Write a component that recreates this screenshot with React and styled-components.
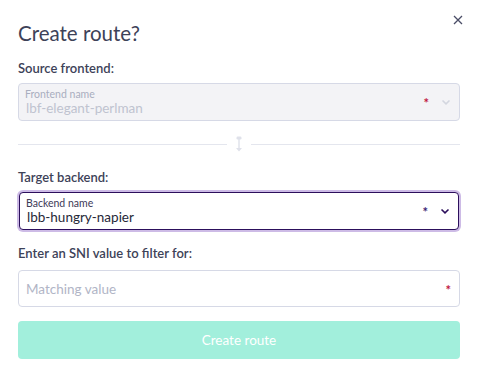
import React from 'react';
import styled, { createGlobalStyle } from 'styled-components';

const GlobalStyle = createGlobalStyle`
  body {
    margin: 0;
    background: #ffffff;
    font-family: Lato, 'Noto Sans', sans-serif;
  }
`;

const Modal = styled.div`
  position: relative;
  width: 480px;
  height: 377px;
  box-sizing: border-box;
  padding: 20px 20px 0 18px;
  display: flex;
  flex-direction: column;
`;

const Title = styled.h2`
  margin: 0;
  font-size: 20.5px;
  font-weight: 400;
  line-height: 26px;
  color: #3d4258;
`;

const Close = styled.button`
  position: absolute;
  top: 12px;
  right: 14px;
  width: 16px;
  height: 16px;
  padding: 0;
  border: none;
  background: none;
  display: flex;
  align-items: center;
  justify-content: center;
`;

const Label = styled.div`
  margin-top: ${(p) => p.top}px;
  font-size: 13px;
  font-weight: 600;
  line-height: 18px;
  color: #3d4258;
`;

const Field = styled.div`
  margin-top: ${(p) => p.gap || 6}px;
  height: ${(p) => (p.plain ? 37 : 38)}px;
  box-sizing: border-box;
  border-radius: 4px;
  display: flex;
  align-items: center;
  padding: 0 8px 0 5px;
  background: ${(p) => (p.disabled ? '#f3f3f6' : '#ffffff')};
  border: ${(p) => (p.active ? '1.5px solid #2c0f5c' : '1px solid #d6d9e6')};
  box-shadow: ${(p) => (p.active ? '0 0 0 2px #cdbbe6' : 'none')};
  margin-left: ${(p) => (p.active ? 1 : 0)}px;
  margin-right: ${(p) => (p.active ? 1 : 0)}px;
`;

const FieldBody = styled.div`
  flex: 1;
  display: flex;
  flex-direction: column;
  padding-top: 1px;
`;

const FloatLabel = styled.div`
  font-size: 10.5px;
  line-height: 11px;
  padding-left: 1px;
  color: ${(p) => (p.active ? '#3d3a57' : '#a9aebf')};
`;

const Value = styled.div`
  font-size: 13.5px;
  line-height: 16px;
  padding-left: 2px;
  color: ${(p) => (p.muted ? '#bfc3d0' : '#262838')};
`;

const Placeholder = styled.div`
  flex: 1;
  font-size: 13.5px;
  padding-left: 2px;
  color: #b1b5c6;
`;

const Star = styled.span`
  font-size: 13px;
  line-height: 1;
  font-weight: 700;
  color: ${(p) => p.color};
  margin-right: ${(p) => p.gap}px;
  margin-top: 3px;
`;

const Divider = styled.div`
  margin-top: 15px;
  display: flex;
  align-items: center;
  gap: 8px;
`;

const Rule = styled.div`
  flex: 1;
  height: 1px;
  background: #e4e6ee;
`;

const Button = styled.button`
  margin-top: 14px;
  height: 38px;
  border: none;
  border-radius: 4px;
  background: #a2efdc;
  color: #ffffff;
  font-family: inherit;
  font-size: 13.5px;
`;

const Chevron = ({ color }) => (
  <svg width="10" height="8" viewBox="0 0 10 8">
    <path d="M1.5 2.5 L5 5.8 L8.5 2.5" fill="none" stroke={color} strokeWidth="1.6" />
  </svg>
);

const LinkIcon = () => (
  <svg width="8" height="16" viewBox="0 0 8 16">
    <rect x="1.5" y="0.5" width="5" height="3" rx="1.2" fill="#dfe1ea" />
    <rect x="3.3" y="3" width="1.4" height="10" fill="#dfe1ea" />
    <path d="M1 12 L4 15.5 L7 12 Z" fill="#dfe1ea" />
  </svg>
);

const App = () => (
  <Modal>
    <GlobalStyle />
    <Close aria-label="close">
      <svg width="10" height="10" viewBox="0 0 10 10">
        <path d="M1 1 L9 9 M9 1 L1 9" stroke="#4a4d66" strokeWidth="1.3" />
      </svg>
    </Close>
    <Title>Create route?</Title>

    <Label top={13}>Source frontend:</Label>
    <Field disabled>
      <FieldBody>
        <FloatLabel>Frontend name</FloatLabel>
        <Value muted>lbf-elegant-perlman</Value>
      </FieldBody>
      <Star color="#c0163f" gap={12}>*</Star>
      <Chevron color="#d3d6df" />
    </Field>

    <Divider>
      <Rule />
      <LinkIcon />
      <Rule />
    </Divider>

    <Label top={16}>Target backend:</Label>
    <Field active>
      <FieldBody>
        <FloatLabel active>Backend name</FloatLabel>
        <Value>lbb-hungry-napier</Value>
      </FieldBody>
      <Star color="#3b1e73" gap={12}>*</Star>
      <Chevron color="#2c0f5c" />
    </Field>

    <Label top={14}>Enter an SNI value to filter for:</Label>
    <Field plain gap={8}>
      <Placeholder>Matching value</Placeholder>
      <Star color="#c0163f" gap={0}>*</Star>
    </Field>

    <Button>Create route</Button>
  </Modal>
);

export default App;
